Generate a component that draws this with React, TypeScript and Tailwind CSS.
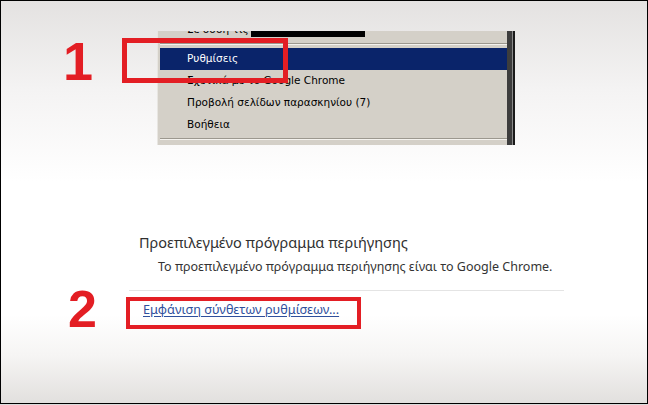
const menuFont = { fontFamily: '"DejaVu Sans", Tahoma, sans-serif' };
const uiFont = { fontFamily: '"Noto Sans", "Open Sans", sans-serif' };

function MenuRow({ label, active }: { label: string; active?: boolean }) {
  return (
    <div
      className={
        "h-[22px] flex items-center pl-[27px] text-[10.5px] " +
        (active ? "bg-[#0a246a] text-white" : "text-black")
      }
    >
      {label}
    </div>
  );
}

function ChromeMenu() {
  return (
    <div className="ml-[156px] mt-[30px] w-[358px] h-[114px] flex" style={menuFont}>
      <div className="flex-1 bg-[#d4d0c8] border-l border-[#e8e6e2] pl-[2px] flex flex-col overflow-hidden">
        {/* cut-off first item */}
        <div className="h-[12px] overflow-hidden flex items-start pl-[27px] text-[10.5px] text-black">
          <span className="-mt-[9px]">Σε σσση τις</span>
          <span className="ml-[2px] w-[114px] h-[6px] bg-black" />
        </div>
        <div className="h-px bg-[#9c988f]" />
        <div className="h-px bg-[#f4f2ee] mb-[3px]" />
        <MenuRow label="Ρυθμίσεις" active />
        <MenuRow label="Σχετικά με το Google Chrome" />
        <MenuRow label="Προβολή σελίδων παρασκηνίου (7)" />
        <MenuRow label="Βοήθεια" />
        <div className="mt-[2px] h-px bg-[#9c988f]" />
        <div className="h-px bg-[#f4f2ee]" />
      </div>
      <div className="w-[5px] bg-[#3d3d3d]" />
      <div className="w-px bg-[#8a8a8a]" />
      <div className="w-[2px] bg-[#1a1a1a]" />
    </div>
  );
}

function BrowserSettings() {
  return (
    <div className="mt-[87px] ml-[128px] w-[435px]" style={uiFont}>
      <div className="ml-[10px] text-[14.5px] leading-[20px] text-[#303030]">
        Προεπιλεγμένο πρόγραμμα περιήγησης
      </div>
      <div className="ml-[29px] mt-[6px] text-[12.5px] leading-[18px] text-[#333333]">
        Το προεπιλεγμένο πρόγραμμα περιήγησης είναι το Google Chrome.
      </div>
      <div className="mt-[14px] h-px bg-[#e4e4e4]" />
      <div className="ml-[14px] mt-[9px] text-[12.7px] leading-[18px]">
        <a href="#" className="text-[#2f4f9c] underline underline-offset-2">
          Εμφάνιση σύνθετων ρυθμίσεων...
        </a>
      </div>
    </div>
  );
}

export default function App() {
  return (
    <div className="w-[648px] h-[405px] flex flex-col bg-[#dedcda]">
      <div className="relative h-[404px] border border-black overflow-hidden bg-[linear-gradient(180deg,#e4e2e1_0%,#f4f3f3_22%,#ffffff_45%,#ffffff_78%,#f6f5f4_88%,#e2e0de_100%)]">
        <ChromeMenu />
        <BrowserSettings />

        {/* annotations */}
        <div
          className="absolute left-[62px] top-[33px] text-[54px] leading-none font-bold text-[#e31e24]"
          style={{ fontFamily: '"Liberation Sans", Arial, sans-serif' }}
        >
          1
        </div>
        <div className="absolute left-[121px] top-[37px] w-[166px] h-[45px] border-[5px] border-[#e31e24]" />
        <div
          className="absolute left-[67px] top-[282px] text-[52px] leading-none font-bold text-[#e31e24]"
          style={{ fontFamily: '"Liberation Sans", Arial, sans-serif' }}
        >
          2
        </div>
        <div className="absolute left-[125px] top-[296px] w-[235px] h-[32px] border-[4px] border-[#e31e24]" />
      </div>
      <div className="h-px bg-[#dcdcdc]" />
    </div>
  );
}
